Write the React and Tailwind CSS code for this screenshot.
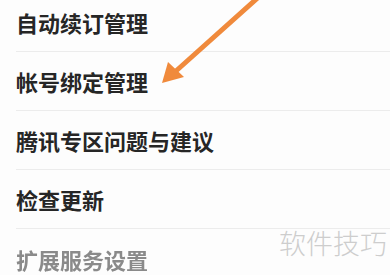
import React from "react";

const items = [
  "自动续订管理",
  "帐号绑定管理",
  "腾讯专区问题与建议",
  "检查更新",
  "扩展服务设置",
];

export default function App() {
  return (
    <div
      className="relative w-[390px] h-[275px] overflow-hidden bg-[#fdfdfd]"
      style={{ fontFamily: '"Noto Sans CJK SC", "Noto Sans", sans-serif' }}
    >
      <div className="flex flex-col -mt-[7px] pl-4">
        {items.map((t, i) => (
          <div
            key={t}
            className={
              "flex items-center h-[59px] " +
              (i < items.length - 1 ? "border-b border-[#ececec]" : "")
            }
          >
            <span
              className={
                "text-[22px] leading-none font-semibold " +
                (i === items.length - 1 ? "text-[#8a8a8a] blur-[0.6px]" : "text-[#262626]")
              }
            >
              {t}
            </span>
          </div>
        ))}
      </div>
      <svg
        className="absolute left-0 top-0"
        width="390"
        height="275"
        viewBox="0 0 390 275"
      >
        <line
          x1="262"
          y1="-6"
          x2="176"
          y2="71"
          stroke="#f08a3c"
          strokeWidth="5"
          strokeLinecap="round"
        />
        <polygon points="162,83 168,62 184,77" fill="#f08a3c" />
      </svg>
      <div className="absolute left-[279px] top-[229px] text-[27px] leading-none text-[#cdcdcd] font-light">
        软件技巧
      </div>
    </div>
  );
}
